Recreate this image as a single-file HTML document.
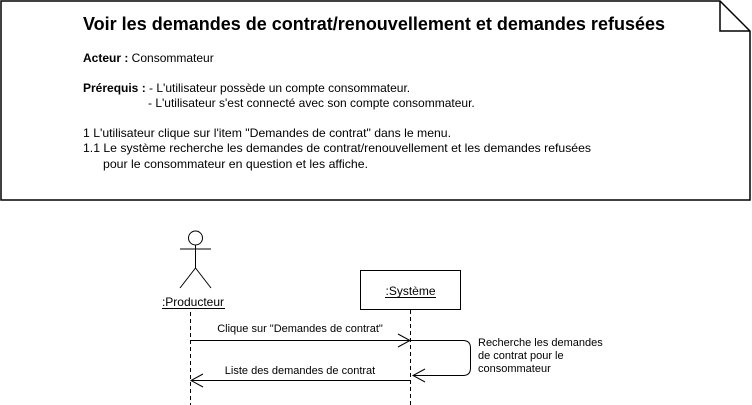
<!DOCTYPE html>
<html><head><meta charset="utf-8"><style>
html,body{margin:0;padding:0;background:#fff;width:752px;height:405px;overflow:hidden}
svg{display:block}
text{font-family:"Liberation Sans",Arial,sans-serif;fill:#000}
</style></head><body>
<svg width="752" height="405" viewBox="0 0 752 405" xmlns="http://www.w3.org/2000/svg">
<g fill="none" stroke="#000" stroke-width="1.5">
<path d="M1,1 H720 L750,31 V200 H1 Z"/>
<path d="M720,1 V31 H750"/>
</g>
<text x="83" y="30" font-size="18" font-weight="bold" textLength="582" lengthAdjust="spacingAndGlyphs">Voir les demandes de contrat/renouvellement et demandes refusées</text>
<g font-size="12">
<text x="83" y="62"><tspan font-weight="bold">Acteur :</tspan> Consommateur</text>
<text x="83" y="92"><tspan font-weight="bold">Prérequis :</tspan> - L'utilisateur possède un compte consommateur.</text>
<text x="148" y="107">- L'utilisateur s'est connecté avec son compte consommateur.</text>
<text x="83" y="137" textLength="368" lengthAdjust="spacingAndGlyphs">1 L'utilisateur clique sur l'item "Demandes de contrat" dans le menu.</text>
<text x="83" y="152" textLength="508" lengthAdjust="spacingAndGlyphs">1.1 Le système recherche les demandes de contrat/renouvellement et les demandes refusées</text>
<text x="103" y="168" textLength="265" lengthAdjust="spacingAndGlyphs">pour le consommateur en question et les affiche.</text>
</g>
<g fill="none" stroke="#000" stroke-width="1">
<circle cx="195.5" cy="238" r="7"/>
<path d="M195.5,245 V268 M180,249 H211 M195.5,268 L180,288 M195.5,268 L211,288"/>
<rect x="360.5" y="270.5" width="100" height="39"/>
<path d="M190.5,312 V405 M410.5,310 V405" stroke-dasharray="4,3"/>
<path d="M190,340.5 H410 M398,334 L410,340.5 L398,347"/>
<path d="M411,340.5 H463 Q470.5,340.5 470.5,348 V368 Q470.5,375.5 463,375.5 H413 M425,369 L413,375.5 L425,382"/>
<path d="M410,380.5 H191 M203,374 L191,380.5 L203,387"/>
</g>
<text x="193" y="306" font-size="12" text-anchor="middle">:Producteur</text>
<path d="M162,308.5 H225 M385,297.5 H436" stroke="#000" stroke-width="1"/>
<text x="410.5" y="295" font-size="12" text-anchor="middle">:Système</text>
<g font-size="11">
<text x="300" y="332" text-anchor="middle">Clique sur "Demandes de contrat"</text>
<text x="300" y="374" text-anchor="middle">Liste des demandes de contrat</text>
<text x="478" y="346">Recherche les demandes</text>
<text x="478" y="359">de contrat pour le</text>
<text x="478" y="372">consommateur</text>
</g>
</svg>
</body></html>
